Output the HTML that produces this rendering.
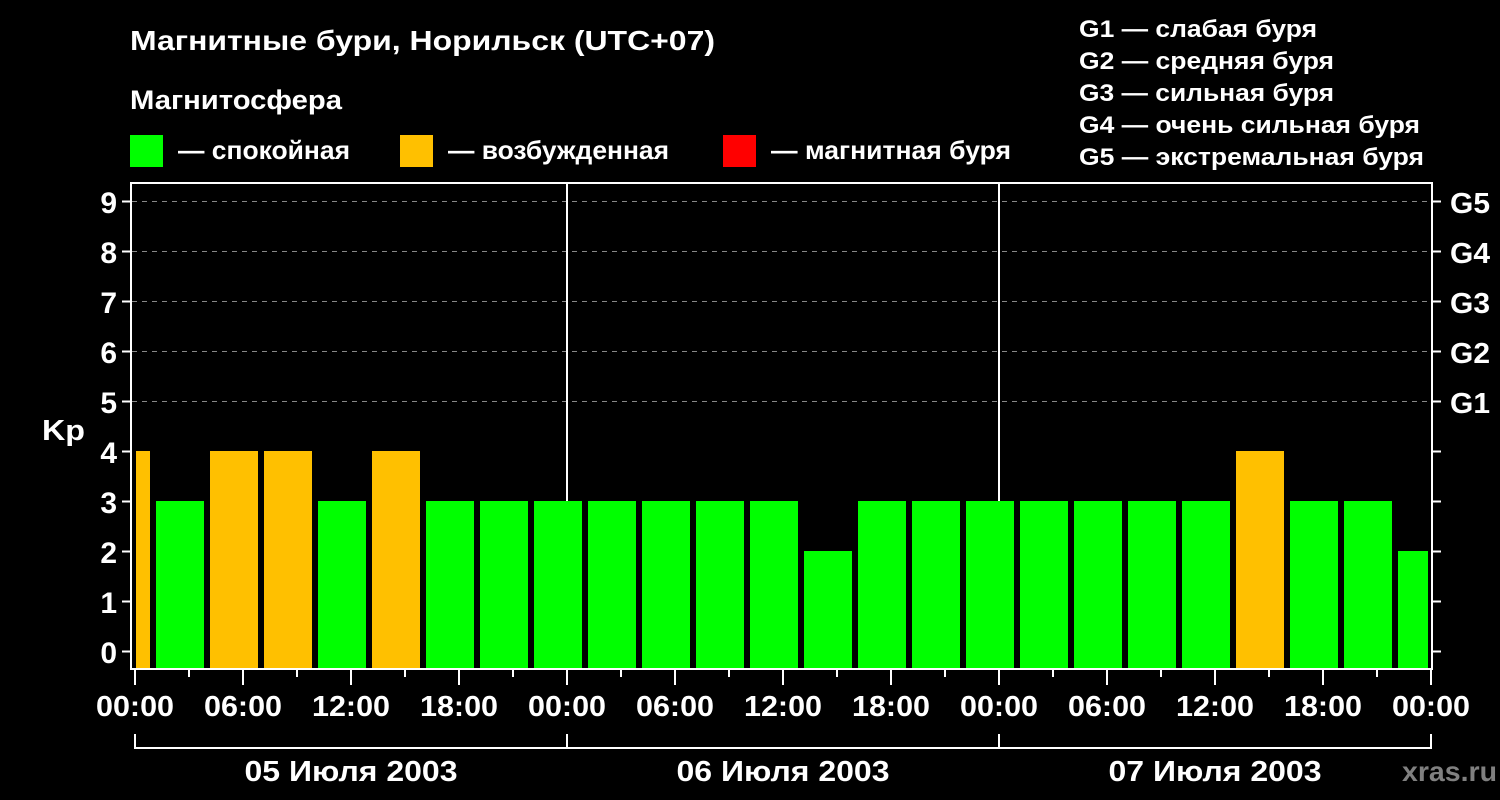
<!DOCTYPE html>
<html><head><meta charset="utf-8"><style>
html,body{margin:0;padding:0;background:#000;width:1500px;height:800px;overflow:hidden}
svg text{font-family:"Liberation Sans",Arial,sans-serif;font-weight:bold;fill:#fff}
</style></head><body>
<svg width="1500" height="800" viewBox="0 0 1500 800" xmlns="http://www.w3.org/2000/svg">
<rect width="1500" height="800" fill="#000"/>
<text x="130" y="50" font-size="28" textLength="585" lengthAdjust="spacingAndGlyphs">Магнитные бури, Норильск (UTC+07)</text>
<text x="130" y="109" font-size="27" textLength="212" lengthAdjust="spacingAndGlyphs">Магнитосфера</text>
<rect x="130" y="135" width="33" height="32" fill="#00ff00"/>
<text x="178" y="159" font-size="26" textLength="172" lengthAdjust="spacingAndGlyphs">— спокойная</text>
<rect x="400" y="135" width="33" height="32" fill="#ffc000"/>
<text x="448" y="159" font-size="26" textLength="221" lengthAdjust="spacingAndGlyphs">— возбужденная</text>
<rect x="723" y="135" width="33" height="32" fill="#ff0000"/>
<text x="771" y="159" font-size="26" textLength="240" lengthAdjust="spacingAndGlyphs">— магнитная буря</text>
<text x="1079" y="37" font-size="24" textLength="238" lengthAdjust="spacingAndGlyphs">G1 — слабая буря</text>
<text x="1079" y="69" font-size="24" textLength="255" lengthAdjust="spacingAndGlyphs">G2 — средняя буря</text>
<text x="1079" y="101" font-size="24" textLength="255" lengthAdjust="spacingAndGlyphs">G3 — сильная буря</text>
<text x="1079" y="133" font-size="24" textLength="341" lengthAdjust="spacingAndGlyphs">G4 — очень сильная буря</text>
<text x="1079" y="165" font-size="24" textLength="345" lengthAdjust="spacingAndGlyphs">G5 — экстремальная буря</text>
<g stroke="#888" stroke-width="1" stroke-dasharray="5,5">
<line x1="132" y1="201.5" x2="1432" y2="201.5"/>
<line x1="132" y1="251.5" x2="1432" y2="251.5"/>
<line x1="132" y1="301.5" x2="1432" y2="301.5"/>
<line x1="132" y1="351.5" x2="1432" y2="351.5"/>
<line x1="132" y1="401.5" x2="1432" y2="401.5"/>
</g>
<g stroke="#fff" stroke-width="2">
<line x1="567" y1="183" x2="567" y2="668"/>
<line x1="999" y1="183" x2="999" y2="668"/>
</g>
<g>
<rect x="136" y="451" width="14" height="217" fill="#ffc000"/>
<rect x="156" y="501" width="48" height="167" fill="#00ff00"/>
<rect x="210" y="451" width="48" height="217" fill="#ffc000"/>
<rect x="264" y="451" width="48" height="217" fill="#ffc000"/>
<rect x="318" y="501" width="48" height="167" fill="#00ff00"/>
<rect x="372" y="451" width="48" height="217" fill="#ffc000"/>
<rect x="426" y="501" width="48" height="167" fill="#00ff00"/>
<rect x="480" y="501" width="48" height="167" fill="#00ff00"/>
<rect x="534" y="501" width="48" height="167" fill="#00ff00"/>
<rect x="588" y="501" width="48" height="167" fill="#00ff00"/>
<rect x="642" y="501" width="48" height="167" fill="#00ff00"/>
<rect x="696" y="501" width="48" height="167" fill="#00ff00"/>
<rect x="750" y="501" width="48" height="167" fill="#00ff00"/>
<rect x="804" y="551" width="48" height="117" fill="#00ff00"/>
<rect x="858" y="501" width="48" height="167" fill="#00ff00"/>
<rect x="912" y="501" width="48" height="167" fill="#00ff00"/>
<rect x="966" y="501" width="48" height="167" fill="#00ff00"/>
<rect x="1020" y="501" width="48" height="167" fill="#00ff00"/>
<rect x="1074" y="501" width="48" height="167" fill="#00ff00"/>
<rect x="1128" y="501" width="48" height="167" fill="#00ff00"/>
<rect x="1182" y="501" width="48" height="167" fill="#00ff00"/>
<rect x="1236" y="451" width="48" height="217" fill="#ffc000"/>
<rect x="1290" y="501" width="48" height="167" fill="#00ff00"/>
<rect x="1344" y="501" width="48" height="167" fill="#00ff00"/>
<rect x="1398" y="551" width="30" height="117" fill="#00ff00"/>
</g>
<rect x="131" y="183" width="1301" height="486" fill="none" stroke="#fff" stroke-width="2"/>
<g stroke="#fff" stroke-width="2">
<line x1="122" y1="201.5" x2="131" y2="201.5"/><line x1="122" y1="251.5" x2="131" y2="251.5"/>
<line x1="122" y1="301.5" x2="131" y2="301.5"/><line x1="122" y1="351.5" x2="131" y2="351.5"/>
<line x1="122" y1="401.5" x2="131" y2="401.5"/><line x1="122" y1="451.5" x2="131" y2="451.5"/>
<line x1="122" y1="501.5" x2="131" y2="501.5"/><line x1="122" y1="551.5" x2="131" y2="551.5"/>
<line x1="122" y1="601.5" x2="131" y2="601.5"/><line x1="122" y1="651.5" x2="131" y2="651.5"/>
<line x1="1432" y1="201.5" x2="1441" y2="201.5"/><line x1="1432" y1="251.5" x2="1441" y2="251.5"/>
<line x1="1432" y1="301.5" x2="1441" y2="301.5"/><line x1="1432" y1="351.5" x2="1441" y2="351.5"/>
<line x1="1432" y1="401.5" x2="1441" y2="401.5"/><line x1="1432" y1="451.5" x2="1441" y2="451.5"/>
<line x1="1432" y1="501.5" x2="1441" y2="501.5"/><line x1="1432" y1="551.5" x2="1441" y2="551.5"/>
<line x1="1432" y1="601.5" x2="1441" y2="601.5"/><line x1="1432" y1="651.5" x2="1441" y2="651.5"/>
</g>
<g stroke="#fff" stroke-width="2">
<line x1="135" y1="669" x2="135" y2="685"/><line x1="189" y1="669" x2="189" y2="677"/>
<line x1="243" y1="669" x2="243" y2="685"/><line x1="297" y1="669" x2="297" y2="677"/>
<line x1="351" y1="669" x2="351" y2="685"/><line x1="405" y1="669" x2="405" y2="677"/>
<line x1="459" y1="669" x2="459" y2="685"/><line x1="513" y1="669" x2="513" y2="677"/>
<line x1="567" y1="669" x2="567" y2="685"/><line x1="621" y1="669" x2="621" y2="677"/>
<line x1="675" y1="669" x2="675" y2="685"/><line x1="729" y1="669" x2="729" y2="677"/>
<line x1="783" y1="669" x2="783" y2="685"/><line x1="837" y1="669" x2="837" y2="677"/>
<line x1="891" y1="669" x2="891" y2="685"/><line x1="945" y1="669" x2="945" y2="677"/>
<line x1="999" y1="669" x2="999" y2="685"/><line x1="1053" y1="669" x2="1053" y2="677"/>
<line x1="1107" y1="669" x2="1107" y2="685"/><line x1="1161" y1="669" x2="1161" y2="677"/>
<line x1="1215" y1="669" x2="1215" y2="685"/><line x1="1269" y1="669" x2="1269" y2="677"/>
<line x1="1323" y1="669" x2="1323" y2="685"/><line x1="1377" y1="669" x2="1377" y2="677"/>
<line x1="1431" y1="669" x2="1431" y2="685"/>
<polyline points="135,734 135,748 1431,748 1431,734" fill="none"/>
<line x1="567" y1="734" x2="567" y2="748"/><line x1="999" y1="734" x2="999" y2="748"/>
</g>
<g font-size="30" text-anchor="end">
<text x="117" y="213">9</text><text x="117" y="263">8</text><text x="117" y="313">7</text>
<text x="117" y="363">6</text><text x="117" y="413">5</text><text x="117" y="463">4</text>
<text x="117" y="513">3</text><text x="117" y="563">2</text><text x="117" y="613">1</text>
<text x="117" y="663">0</text>
</g>
<text x="42" y="440" font-size="29" textLength="43" lengthAdjust="spacingAndGlyphs">Kp</text>
<g font-size="29">
<text x="1450" y="213" textLength="40" lengthAdjust="spacingAndGlyphs">G5</text>
<text x="1450" y="263" textLength="40" lengthAdjust="spacingAndGlyphs">G4</text>
<text x="1450" y="313" textLength="40" lengthAdjust="spacingAndGlyphs">G3</text>
<text x="1450" y="363" textLength="40" lengthAdjust="spacingAndGlyphs">G2</text>
<text x="1450" y="413" textLength="40" lengthAdjust="spacingAndGlyphs">G1</text>
</g>
<g font-size="29" text-anchor="middle">
<text x="135" y="716" textLength="78" lengthAdjust="spacingAndGlyphs">00:00</text>
<text x="243" y="716" textLength="78" lengthAdjust="spacingAndGlyphs">06:00</text>
<text x="351" y="716" textLength="78" lengthAdjust="spacingAndGlyphs">12:00</text>
<text x="459" y="716" textLength="78" lengthAdjust="spacingAndGlyphs">18:00</text>
<text x="567" y="716" textLength="78" lengthAdjust="spacingAndGlyphs">00:00</text>
<text x="675" y="716" textLength="78" lengthAdjust="spacingAndGlyphs">06:00</text>
<text x="783" y="716" textLength="78" lengthAdjust="spacingAndGlyphs">12:00</text>
<text x="891" y="716" textLength="78" lengthAdjust="spacingAndGlyphs">18:00</text>
<text x="999" y="716" textLength="78" lengthAdjust="spacingAndGlyphs">00:00</text>
<text x="1107" y="716" textLength="78" lengthAdjust="spacingAndGlyphs">06:00</text>
<text x="1215" y="716" textLength="78" lengthAdjust="spacingAndGlyphs">12:00</text>
<text x="1323" y="716" textLength="78" lengthAdjust="spacingAndGlyphs">18:00</text>
<text x="1431" y="716" textLength="78" lengthAdjust="spacingAndGlyphs">00:00</text>
<text x="351" y="781" textLength="213" lengthAdjust="spacingAndGlyphs">05 Июля 2003</text>
<text x="783" y="781" textLength="213" lengthAdjust="spacingAndGlyphs">06 Июля 2003</text>
<text x="1215" y="781" textLength="213" lengthAdjust="spacingAndGlyphs">07 Июля 2003</text>
</g>
<text x="1402" y="781" font-size="28" textLength="95" lengthAdjust="spacingAndGlyphs" style="fill:#808080">xras.ru</text>
</svg>
</body></html>
